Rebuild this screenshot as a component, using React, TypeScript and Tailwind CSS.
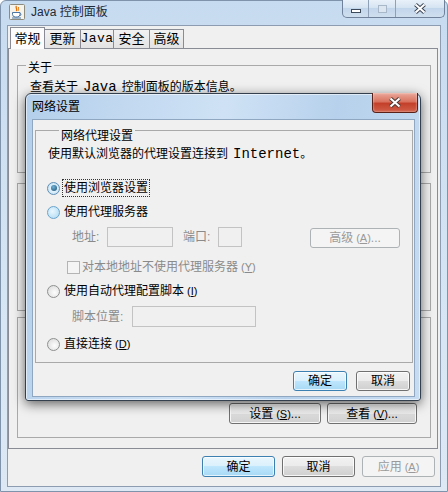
import clsx from "clsx";
import type { ReactNode } from "react";

const mono = "font-['Liberation_Mono',monospace] text-[13px]";

function Mn({ k }: { k: string }) {
  return (
    <span className="ml-[3px] text-[11px] leading-[14px]">
      (<span className="underline">{k}</span>)
    </span>
  );
}

function Btn({
  children,
  variant = "normal",
  className,
}: {
  children: ReactNode;
  variant?: "normal" | "default" | "disabled";
  className?: string;
}) {
  return (
    <div
      className={clsx(
        "flex shrink-0 items-center justify-center rounded-[3px] border leading-none",
        variant === "default" &&
          "border-[#3c7fb1] bg-[linear-gradient(#eaf6fd,#d9f0fc_50%,#bee6fd_50%,#a7d9f5)] shadow-[inset_0_0_0_1px_rgba(255,255,255,0.7)]",
        variant === "normal" &&
          "border-[#707070] bg-[linear-gradient(#f2f2f2,#ebebeb_50%,#dddddd_50%,#cfcfcf)] shadow-[inset_0_0_0_1px_rgba(255,255,255,0.8)]",
        variant === "disabled" && "border-[#adb2b5] bg-[#f4f4f4] text-[#9a9a9a]",
        className
      )}
    >
      {children}
    </div>
  );
}

function Group({
  title,
  legendClass,
  className,
  children,
}: {
  title?: ReactNode;
  legendClass?: string;
  className?: string;
  children?: ReactNode;
}) {
  return (
    <div className={clsx("flex flex-col border border-[#a9a9a9]", className)}>
      {title && <span className={clsx("block w-fit bg-[#f0f0f0] px-[2px] leading-[14px]", legendClass)}>{title}</span>}
      {children}
    </div>
  );
}

function Radio({ checked, hover }: { checked?: boolean; hover?: boolean }) {
  return (
    <span
      className={clsx(
        "flex h-[13px] w-[13px] shrink-0 items-center justify-center rounded-full border",
        checked && "border-[#5f8fb5] bg-[radial-gradient(circle,#dff1fb_40%,#b9dcf2)]",
        hover && "border-[#6aa4cc] bg-[radial-gradient(circle_at_40%_40%,#eaf7fe,#a9d8f3)]",
        !checked && !hover && "border-[#8e8f8f] bg-[radial-gradient(circle_at_60%_60%,#fdfdfd,#d7d7d7)]"
      )}
    >
      {checked && (
        <span className="h-[6px] w-[6px] rounded-full bg-[radial-gradient(circle_at_40%_35%,#6fb3d8,#1b4c6d)]" />
      )}
    </span>
  );
}

function CloseGlyph({ light }: { light?: boolean }) {
  return (
    <svg width="14" height="11" viewBox="0 0 14 11">
      <path d="M2.5 1.5 L11.5 9.5 M11.5 1.5 L2.5 9.5" stroke={light ? "#4a3a36" : "#3d4756"} strokeWidth="4" />
      <path d="M2.5 1.5 L11.5 9.5 M11.5 1.5 L2.5 9.5" stroke="#ffffff" strokeWidth="2" />
    </svg>
  );
}

function JavaIcon() {
  return (
    <svg width="16" height="16" viewBox="0 0 16 16">
      <rect x="0.5" y="0.5" width="15" height="15" rx="1" fill="#f6f3ea" stroke="#8d8a7e" />
      <path d="M7.5 2 C5.8 3.6 9 4.6 7.3 7" stroke="#e76f00" fill="none" strokeWidth="1.3" />
      <path d="M9.6 3 C8.7 4.3 10.4 5.1 9.1 6.8" stroke="#e76f00" fill="none" strokeWidth="1" />
      <path d="M3.5 8.5 h7.5 v1.8 a2.8 2.8 0 0 1 -2.8 2.7 h-1.9 a2.8 2.8 0 0 1 -2.8 -2.7 z" fill="#ffffff" stroke="#4b76a6" />
      <path d="M11 9.2 a1.4 1.4 0 0 1 0 2.6" stroke="#4b76a6" fill="none" />
      <path d="M3 14 h9" stroke="#4b76a6" />
    </svg>
  );
}

const tabs = ["常规", "更新", "Java", "安全", "高级"];

function NetworkDialog() {
  return (
    <div className="absolute left-[25px] top-[93px] flex h-[308px] w-[396px] flex-col rounded-t-[6px] rounded-b-[3px] border border-[#34404e] bg-[linear-gradient(100deg,#b4cfeb,#cfe2f5_45%,#b7d1ec_70%,#c7dcf1)] pl-[6px] pr-[5px] pb-[3px] shadow-[0_3px_12px_rgba(0,0,0,0.6),inset_0_0_0_1px_rgba(255,255,255,0.55)]">
      <div className="flex h-[25px] shrink-0 items-start">
        <span className="mt-[5px] leading-[16px]">网络设置</span>
        <div className="-mr-[3px] -mt-px ml-auto flex h-[20px] w-[46px] items-center justify-center rounded-b-[4px] border border-t-0 border-[#5a2119] bg-[linear-gradient(#eba99b,#d9735f_45%,#c4402a_55%,#d0604a)] shadow-[inset_0_0_2px_rgba(255,255,255,0.8)]">
          <CloseGlyph light />
        </div>
      </div>
      <div className="flex flex-1 flex-col border border-[#8fa7c1] bg-[#f0f0f0] pl-[2px] pr-[1px] pb-[5px]">
        <Group title="网络代理设置" legendClass="-mt-[2px] ml-[12px]" className="mt-[10px] pl-[11px] pb-[8px]">
          <div className="ml-[1px] mt-[3px] flex h-[16px] items-center whitespace-nowrap leading-[16px]">
            <span>使用默认浏览器的代理设置连接到</span>
            <span className={clsx(mono, "ml-[5px] text-[14px]")}>Internet</span>
            <span>。</span>
          </div>
          <div className="mt-[16px] flex h-[20px] items-center gap-[3px]">
            <Radio checked />
            <span className="px-[1px] leading-[16px] outline-1 outline-dotted outline-[#333]">使用浏览器设置</span>
          </div>
          <div className="mt-[4px] flex h-[20px] items-center gap-[4px]">
            <Radio hover />
            <span className="leading-[16px]">使用代理服务器</span>
          </div>
          <div className="mt-[5px] flex h-[21px] items-start pl-[25px] text-[#8a8a8a]">
            <span className="w-[35px] leading-[20px]">地址:</span>
            <span className="h-[20px] w-[66px] border border-[#c3c3c3] bg-[#f0f0f0]" />
            <span className="ml-[10px] w-[35px] leading-[20px]">端口:</span>
            <span className="h-[20px] w-[24px] border border-[#c3c3c3] bg-[#f0f0f0]" />
            <Btn variant="disabled" className="ml-[68px] mt-[1px] h-[20px] w-[90px]">
              <span>高级</span>
              <Mn k="A" />
              <span>...</span>
            </Btn>
          </div>
          <div className="mt-[11px] flex h-[16px] items-center pl-[20px] text-[#8a8a8a]">
            <span className="mr-[2px] h-[13px] w-[13px] border border-[#b4b4b4] bg-[#f4f4f4]" />
            <span className="leading-[14px]">对本地地址不使用代理服务器</span>
            <Mn k="Y" />
          </div>
          <div className="mt-[6px] flex h-[20px] items-center">
            <Radio />
            <span className="ml-[4px] leading-[14px]">使用自动代理配置脚本</span>
            <Mn k="I" />
          </div>
          <div className="mt-[5px] flex h-[21px] items-center pl-[25px] text-[#8a8a8a]">
            <span className="w-[60px] leading-[14px]">脚本位置:</span>
            <span className="h-[21px] w-[124px] border border-[#c3c3c3] bg-[#f0f0f0]" />
          </div>
          <div className="mt-[7px] flex h-[20px] items-center">
            <Radio />
            <span className="ml-[4px] leading-[14px]">直接连接</span>
            <Mn k="D" />
          </div>
        </Group>
        <div className="mt-[8px] flex justify-end gap-[9px] pr-[3px]">
          <Btn variant="default" className="h-[20px] w-[54px]">
            确定
          </Btn>
          <Btn className="h-[20px] w-[54px]">取消</Btn>
        </div>
      </div>
    </div>
  );
}

export default function App() {
  return (
    <div className="relative h-[492px] w-[448px] overflow-hidden bg-white font-['Liberation_Sans','Noto_Sans_CJK_SC',sans-serif] text-[12px] text-black">
      <div className="flex h-full flex-col rounded-t-[6px] border border-[#7f93aa] bg-[linear-gradient(180deg,#c7dbf0,#d6e5f4_60%,#dde8f4)] px-[6px] pb-[4px]">
        <div className="flex h-[24px] shrink-0 items-start">
          <div className="ml-[2px] mt-[3px] flex items-center gap-[6px]">
            <JavaIcon />
            <span className="text-[12px] leading-[16px] text-[#1e2a38]">Java 控制面板</span>
          </div>
          <div className="-mr-[4px] -mt-px ml-auto flex h-[18px] overflow-hidden rounded-b-[5px] border border-t-0 border-[#6f829a] bg-[linear-gradient(#e9f1f9,#d3e2f1_50%,#c2d6eb_50%,#cfdfef)]">
            <div className="flex w-[26px] items-end justify-center border-r border-[#8ea1b6] pb-[4px]">
              <span className="h-[4px] w-[10px] border border-[#3d4a5a] bg-white" />
            </div>
            <div className="flex w-[27px] items-center justify-center border-r border-[#8ea1b6]">
              <span className="h-[8px] w-[9px] border border-[#a9b8c9] bg-[#dbe6f1]" />
            </div>
            <div className="flex w-[48px] items-center justify-center">
              <CloseGlyph />
            </div>
          </div>
        </div>

        <div className="flex flex-1 flex-col border border-[#8d9cb0] bg-[#f0f0f0] pr-[2px] pb-[9px]">
          <div className="flex h-[22px] shrink-0 items-end pl-[2px]">
            {tabs.map((t, i) => (
              <div
                key={t}
                className={clsx(
                  "flex items-center justify-center border border-b-0 border-[#898c95] leading-[16px]",
                  i === 0
                    ? "relative z-10 -mb-px h-[22px] w-[35px] bg-[#fcfcfc] text-[13px]"
                    : "-ml-px h-[19px] bg-[linear-gradient(#f2f2f2,#e3e3e3)] text-[13px]",
                  i === 1 && "w-[37px]",
                  i === 2 && "w-[34px]",
                  i === 3 && "w-[37px]",
                  i === 4 && "w-[35px]"
                )}
              >
                {t === "Java" ? <span className={clsx(mono, "text-[11px] tracking-[0.5px]")}>Java</span> : t}
              </div>
            ))}
          </div>

          {/* the 常规 tab page; most of it lies under the modal dialog */}
          <div className="flex h-[401px] shrink-0 flex-col border border-[#898c95] bg-[#f0f0f0] pl-[8px] pr-[6px] pt-[16px]">
            <Group title="关于" legendClass="-mt-[5px] ml-[8px]" className="h-[108px]">
              <div className="ml-[12px] mt-[4px] flex h-[16px] items-center whitespace-nowrap leading-[16px]">
                <span>查看关于</span>
                <span className={clsx(mono, "mx-[5px] text-[14px]")}>Java</span>
                <span>控制面板的版本信息。</span>
              </div>
            </Group>
            <Group className="mt-[10px] h-[128px]" />
            <Group className="mt-[6px] h-[121px]">
              <div className="mt-auto flex justify-end gap-[6px] pb-[13px] pr-[13px]">
                <Btn className="h-[21px] w-[92px]">
                  <span>设置</span>
                  <Mn k="S" />
                  <span>...</span>
                </Btn>
                <Btn className="h-[21px] w-[90px]">
                  <span>查看</span>
                  <Mn k="V" />
                  <span>...</span>
                </Btn>
              </div>
            </Group>
          </div>

          <div className="mt-[7px] flex h-[21px] shrink-0 justify-end gap-[7px] pr-[3px]">
            <Btn variant="default" className="h-[21px] w-[73px]">
              确定
            </Btn>
            <Btn className="h-[21px] w-[73px]">取消</Btn>
            <Btn variant="disabled" className="h-[21px] w-[73px]">
              <span>应用</span>
              <Mn k="A" />
            </Btn>
          </div>
        </div>
      </div>
      <NetworkDialog />
    </div>
  );
}
